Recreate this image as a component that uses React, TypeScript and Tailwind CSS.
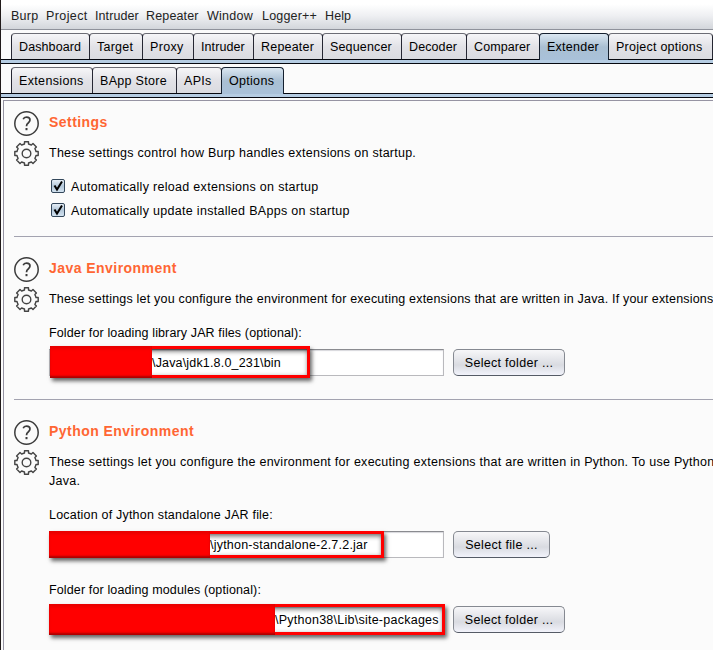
import React from "react";
import clsx from "clsx";

const menu = [
  { label: "Burp", width: "w-[35px] tracking-[0.25px]" },
  { label: "Project", width: "w-[49px] tracking-[0.4px]" },
  { label: "Intruder", width: "w-[51px] tracking-[0.1px]" },
  { label: "Repeater", width: "w-[61px] tracking-[0.15px]" },
  { label: "Window", width: "w-[55px] tracking-[0.25px]" },
  { label: "Logger++", width: "w-[63px] tracking-[0.2px]" },
  { label: "Help", width: "w-[40px] tracking-[0.1px]" },
];

type TabItem = { label: string; width: string; active?: boolean };

const mainTabs: TabItem[] = [
  { label: "Dashboard", width: "w-[79px] tracking-[0.1px]" },
  { label: "Target", width: "w-[54px] tracking-[0.25px]" },
  { label: "Proxy", width: "w-[52px] tracking-[0.35px]" },
  { label: "Intruder", width: "w-[61px] tracking-[0.1px]" },
  { label: "Repeater", width: "w-[70px] tracking-[0.2px]" },
  { label: "Sequencer", width: "w-[80px] tracking-[0.15px]" },
  { label: "Decoder", width: "w-[66px] tracking-[0.1px]" },
  { label: "Comparer", width: "w-[74px] tracking-[0.1px]" },
  { label: "Extender", width: "w-[70px] tracking-[0.25px]", active: true },
  { label: "Project options", width: "w-[105px] tracking-[0.25px]" },
];

const subTabs: TabItem[] = [
  { label: "Extensions", width: "w-[82px] tracking-[0.35px]" },
  { label: "BApp Store", width: "w-[85px] tracking-[0.3px]" },
  { label: "APIs", width: "w-[46px] tracking-[0.3px]" },
  { label: "Options", width: "w-[63px] tracking-[0.3px]", active: true },
];

function TabRow({ tabs }: { tabs: TabItem[] }) {
  return (
    <div>
      <div className="flex h-[27px] border-b border-[#06080f] pl-[10px]">
        {tabs.map((t) => (
          <div
            key={t.label}
            className={clsx(
              "-mr-px shrink-0 whitespace-nowrap rounded-t-[4px] border border-b-0 pl-[7px] text-[12.5px] leading-[26px]",
              t.width,
              t.active
                ? "z-10 h-[27px] border-[#15202f] bg-linear-to-b from-[#dbe7f1] via-[#a9bfd3] to-[#a9c1d9]"
                : "h-[26px] border-x-[#262733] border-t-[#6c6d75] bg-linear-to-b from-[#f6f6f8] via-[#e2e2e7] to-[#dadbe0]"
            )}
          >
            {t.label}
          </div>
        ))}
      </div>
      <div className="h-[4px] border-b border-[#06080f] bg-[#b5cce2]" />
    </div>
  );
}

function HelpIcon() {
  return (
    <svg width="25" height="25" viewBox="0 0 25 25" fill="none" stroke="#3c3c3c" strokeWidth="1.5">
      <circle cx="12.5" cy="12.5" r="11.7" />
      <path d="M9.2 8.2C9.7 6.9 10.9 6.2 12.5 6.2c2.1 0 3.5 1.1 3.5 2.9 0 1.4-.8 2.1-1.8 2.9-1.1.8-1.7 1.4-1.7 3.2" strokeWidth="1.7" />
      <path d="M12.5 17v2.2" strokeWidth="2" />
    </svg>
  );
}

function GearIcon() {
  return (
    <svg width="25" height="25" viewBox="0 0 25 25" fill="none" stroke="#444" strokeWidth="1.4" strokeLinejoin="round">
      <circle cx="12.5" cy="12.5" r="4.3" />
      <path d="M10.5 .8h4v2.2q1.6.4 2.9 1.1L19 2.6 22.4 6 20.9 7.6q.7 1.3 1.1 2.9h2.2v4H22q-.4 1.6-1.1 2.9l1.5 1.6L19 22.4l-1.6-1.5q-1.3.7-2.9 1.1v2.2h-4V22q-1.6-.4-2.9-1.1L6 22.4 2.6 19l1.5-1.6Q3.4 16.1 3 14.5H.8v-4H3q.4-1.6 1.1-2.9L2.6 6 6 2.6l1.6 1.5q1.3-.7 2.9-1.1z" />
    </svg>
  );
}

function Section({ title, className, children }: { title: string; className: string; children: React.ReactNode }) {
  return (
    <section className={clsx("ml-[10px] flex gap-[10px]", className)}>
      <div className="flex w-[25px] shrink-0 flex-col gap-[5px]">
        <HelpIcon />
        <GearIcon />
      </div>
      <div className="min-w-0 flex-1 whitespace-nowrap">
        <h2 className="mb-[11px] h-[22px] text-[14px] font-bold leading-[22px] tracking-[0.45px] text-[#ff6633]">{title}</h2>
        {children}
      </div>
    </section>
  );
}

function Check({ label }: { label: string }) {
  return (
    <div className="flex h-[24px] items-center pl-[2px]">
      <span className="flex h-[14px] w-[14px] rounded-[2px] border border-[#33475b] bg-linear-to-b from-[#e5eef6] via-[#b3c7d9] to-[#d3e3f1]">
        <svg width="12" height="12" viewBox="0 0 12 12" fill="none" stroke="#000" strokeWidth="2">
          <path d="M2.5 5.5L5 9.5 10 1.5" />
        </svg>
      </span>
      <span className="ml-[6px] pt-[2px] text-[12.5px] tracking-[0.3px]">{label}</span>
    </div>
  );
}

type PathFieldProps = { value: string; button: string; buttonWidth: string; frame: string; mask: string; inset: string };

function PathField({ value, button, buttonWidth, frame, mask, inset }: PathFieldProps) {
  return (
    <div className="relative flex h-[27px] gap-[9px]">
      <div className={clsx("h-[27px] w-[395px] border border-[#b9b9bd] border-t-[#8a8b90] bg-white text-[12.5px] leading-[26px] shadow-[inset_0_1px_1px_#d8d8dc]", inset)}>
        {value}
      </div>
      <button className={clsx("h-[27px] rounded-[5px] border border-[#858991] border-b-[#555b66] bg-linear-to-b from-[#f7f7f9] via-[#d9dbe1] via-60% to-[#f2f3fb] text-[12.5px] leading-[26px] tracking-[0.3px]", buttonWidth)}>
        {button}
      </button>
      <div className={clsx("absolute border-[3px] border-[#f00] shadow-[2px_3px_4px_#0009,inset_1px_2px_5px_#0009]", frame)} />
      <div className={clsx("absolute bg-[#f00] shadow-[inset_0_-3px_2px_-1px_#7009,inset_0_3px_3px_#a004]", mask)} />
    </div>
  );
}

export default function App() {
  return (
    <div className="h-[650px] w-[713px] overflow-hidden border-l border-[#201a1a] bg-[#fbfbfb] font-['Liberation_Sans',sans-serif] text-black">
      <nav className="flex h-[30px] border-b border-[#8f929b] bg-linear-to-b from-white from-15% via-[#eeeff2] via-55% to-[#d3d6db] pl-[10px] pt-[3px] text-[12.5px] leading-[27px] text-[#222]">
        {menu.map((m) => (
          <span key={m.label} className={clsx("shrink-0 whitespace-nowrap", m.width)}>{m.label}</span>
        ))}
      </nav>
      <div className="mt-[3px]"><TabRow tabs={mainTabs} /></div>
      <div className="mt-[3px]"><TabRow tabs={subTabs} /></div>
      <main className="ml-[2px] mt-[2px] h-[550px] border-l border-t border-[#9694a3]">
        <Section title="Settings" className="h-[135px] pt-[10px]">
          <p className="text-[12.5px] leading-[18px] tracking-[0.25px]">These settings control how Burp handles extensions on startup.</p>
          <div className="mt-[12px]">
            <Check label="Automatically reload extensions on startup" />
            <Check label="Automatically update installed BApps on startup" />
          </div>
        </Section>
        <div className="ml-[10px] h-px bg-[#a3a3b0]" />
        <Section title="Java Environment" className="h-[162px] pt-[20px]">
          <p className="text-[12.5px] leading-[18px] tracking-[0.19px]">These settings let you configure the environment for executing extensions that are written in Java. If your extensions</p>
          <p className="mb-[7px] mt-[16px] text-[12.5px] leading-[18px] tracking-[0.13px]">Folder for loading library JAR files (optional):</p>
          <PathField value="\Java\jdk1.8.0_231\bin" button="Select folder ..." buttonWidth="w-[112px]" inset="pl-[102px] tracking-[0.17px]" frame="-top-[3px] left-[1px] h-[32px] w-[260px]" mask="-top-[3px] left-[1px] h-[32px] w-[102px]" />
        </Section>
        <div className="ml-[10px] h-px bg-[#a3a3b0]" />
        <Section title="Python Environment" className="pt-[20px]">
          <p className="text-[12.5px] leading-[19px] tracking-[0.26px]">These settings let you configure the environment for executing extensions that are written in Python. To use Python<br />Java.</p>
          <p className="mb-[7px] mt-[15px] text-[12.5px] leading-[18px] tracking-[0.2px]">Location of Jython standalone JAR file:</p>
          <PathField value="\jython-standalone-2.7.2.jar" button="Select file ..." buttonWidth="w-[97px]" inset="pl-[160px] tracking-[0.22px]" frame="top-0 left-0 h-[27px] w-[335px]" mask="top-0 left-0 h-[27px] w-[161px]" />
          <p className="mb-[7px] mt-[23px] text-[12.5px] leading-[18px] tracking-[0.13px]">Folder for loading modules (optional):</p>
          <PathField value="\Python38\Lib\site-packages" button="Select folder ..." buttonWidth="w-[112px]" inset="pl-[225px] tracking-[0.25px]" frame="-top-[2px] left-0 h-[31px] w-[396px]" mask="-top-[2px] left-0 h-[31px] w-[226px]" />
        </Section>
      </main>
    </div>
  );
}
